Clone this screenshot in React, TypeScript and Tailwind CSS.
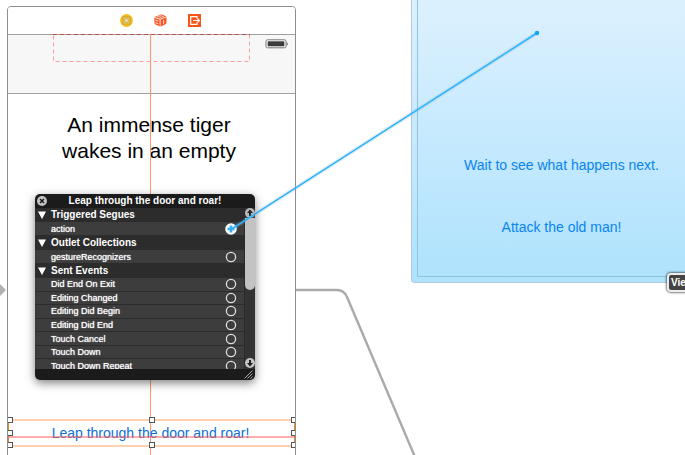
const sentEvents = [
  'Did End On Exit',
  'Editing Changed',
  'Editing Did Begin',
  'Editing Did End',
  'Touch Cancel',
  'Touch Down',
  'Touch Down Repeat',
];

function GroupHeading({ children }: { children: string }) {
  return (
    <h3 className="flex h-[14px] items-center bg-[#2c2c2c] text-[10px] leading-[14px] font-bold">
      <svg className="ml-[3px] mr-[5px] size-2" viewBox="0 0 8 8" aria-hidden="true">
        <path d="M0 0.5h8L4 8z" fill="#fff" />
      </svg>
      {children}
    </h3>
  );
}

function Outlet({ name, connected = false }: { name: string; connected?: boolean }) {
  return (
    <li className="flex min-h-[13px] items-center justify-between border-b border-[#2c2c2c] bg-[#3d3d3d] pl-4 pr-[7px] text-[9px] leading-[12px] [text-shadow:0_0_1px_#fff]">
      <span>{name}</span>
      <button aria-label={`Connect ${name}`} className="flex size-[12px] items-center justify-center">
        <svg className="size-[12px] shrink-0" viewBox="0 0 12 12" aria-hidden="true">
          {connected ? (
            <>
              <circle cx="6" cy="6" r="5.8" fill="#fff" />
              <path d="M6 2.5v7M2.5 6h7" stroke="#2fb0f5" strokeWidth="2.6" />
            </>
          ) : (
            <circle cx="6" cy="6" r="4.6" fill="none" stroke="#dedede" strokeWidth="1.3" />
          )}
        </svg>
      </button>
    </li>
  );
}

function ConnectionsPanel() {
  return (
    <section className="absolute left-[35px] top-[194px] flex h-[186px] w-[220px] flex-col overflow-hidden rounded-[5px] bg-[#1b1b1b] text-white shadow-[0_3px_10px_rgba(0,0,0,0.5)]">
      <header className="flex h-[14px] shrink-0 items-center pl-[2px] pr-[12px]">
        <button aria-label="Close" className="size-[10px]">
          <svg className="size-[10px]" viewBox="0 0 10 10" aria-hidden="true">
            <circle cx="5" cy="5" r="5" fill="#c4c4c4" />
            <path d="M3 3l4 4M7 3l-4 4" stroke="#1b1b1b" strokeWidth="1.5" />
          </svg>
        </button>
        <h2 className="grow text-center text-[10px] leading-[14px] font-bold">Leap through the door and roar!</h2>
      </header>
      <div className="flex h-[161px] shrink-0 overflow-hidden bg-[#3d3d3d]">
        <div className="grow">
          <GroupHeading>Triggered Segues</GroupHeading>
          <ul className="grid h-[14px]">
            <Outlet name="action" connected />
          </ul>
          <GroupHeading>Outlet Collections</GroupHeading>
          <ul className="grid h-[14px]">
            <Outlet name="gestureRecognizers" />
          </ul>
          <GroupHeading>Sent Events</GroupHeading>
          <ul className="grid h-[95px] auto-rows-fr">
            {sentEvents.map((name) => (
              <Outlet key={name} name={name} />
            ))}
          </ul>
        </div>
        <div className="flex w-[11px] flex-col items-center border-l border-[#2a2a2a] bg-[#333]">
          <svg className="size-[10px] shrink-0" viewBox="0 0 10 10" aria-hidden="true">
            <circle cx="5" cy="5" r="5" fill="#b9b9b9" />
            <path d="M5 1.6L8 5H6v3H4V5H2z" fill="#222" />
          </svg>
          <div className="h-[72px] w-[10px] shrink-0 rounded-b-full bg-[#c3c3c3]" />
          <div className="grow" />
          <svg className="mb-px size-[10px] shrink-0" viewBox="0 0 10 10" aria-hidden="true">
            <circle cx="5" cy="5" r="5" fill="#c3c3c3" />
            <path d="M5 8.4L2 5h2V2h2v3h2z" fill="#222" />
          </svg>
        </div>
      </div>
      <footer className="flex grow items-center justify-end pr-[2px]">
        <svg className="size-[9px]" viewBox="0 0 9 9" aria-hidden="true">
          <path d="M0.5 8.5l8-8M3.5 8.5l5-5M6.5 8.5l2-2" stroke="#aaa" strokeWidth="1" />
        </svg>
      </footer>
    </section>
  );
}

function SceneIcons() {
  return (
    <div className="flex h-[27px] items-center justify-center gap-[21px] rounded-t-[3px] bg-white pl-[18px]">
      <svg className="size-[13px]" viewBox="0 0 13 13" aria-hidden="true">
        <circle cx="6.5" cy="6.5" r="6.4" fill="#f7bd1c" />
        <rect x="3" y="3" width="7" height="7" fill="#eccb60" stroke="#b3923a" strokeWidth="0.7" />
        <rect x="5" y="5" width="3" height="3" fill="#fff6d5" stroke="#b3923a" strokeWidth="0.6" />
      </svg>
      <svg className="size-[13px]" viewBox="0 0 13 13" aria-hidden="true">
        <path d="M0.5 3L7.5 0.3l5 2.2L6.2 4.8z" fill="#fb5626" />
        <path d="M0.3 3.8l5.4 1.7v7L0.6 10z" fill="#fb5626" />
        <path d="M6.5 5.5l6.2-2.3-.4 6.6-5.8 2.9z" fill="#fb5626" />
        <path d="M3 2.8l5-1.5M5.5 3.7l4.7-1.6" stroke="#fff" strokeWidth="0.6" />
        <path d="M1.5 6.2l2.8.9M1.5 8.8l2.8.9M9.6 6v4" stroke="#fff" strokeWidth="0.8" />
      </svg>
      <svg className="size-[13px]" viewBox="0 0 13 13" aria-hidden="true">
        <rect width="13" height="13" fill="#fa5518" />
        <path d="M9 4.5V2.7H2.7v7.6H9V8.6" fill="none" stroke="#fff" strokeWidth="1.2" />
        <path d="M5.2 6.5h6M9.4 4.5l2 2-2 2" fill="none" stroke="#fff" strokeWidth="1.1" />
      </svg>
    </div>
  );
}

function Handle() {
  return <span className="size-[6px] border border-[#555] bg-white" />;
}

function SelectedButton() {
  return (
    <div className="absolute inset-x-0 top-[409px] h-[33px] overflow-hidden">
      <button className="absolute inset-x-0 top-[3px] h-[28px] border-x border-y-2 border-x-[#e08a20] border-y-[#ffd0b0] pr-[2px] text-[14px] text-[#0a6fdc]">
        Leap through the door and roar!
      </button>
      <span className="absolute inset-x-0 top-[20px] h-[2px] bg-[#ff5a5a]/50" />
      <div className="absolute -left-px -right-[2px] inset-y-[1px] flex flex-col justify-between">
        <div className="flex justify-between"><Handle /><Handle /><Handle /></div>
        <div className="flex justify-between"><Handle /><Handle /></div>
        <div className="flex justify-between"><Handle /><Handle /><Handle /></div>
      </div>
    </div>
  );
}

function SourceScene() {
  return (
    <article className="absolute -bottom-2 left-[7px] top-[6px] w-[289px] rounded-t-[4px] border border-[#8d8d8d] bg-white">
      <SceneIcons />
      <div className="flex h-[60px] items-start justify-end border-y border-[#a0a0a0] bg-[#f7f7f7] pr-[6px] pt-[4px]">
        <svg className="h-[10px] w-[24px]" viewBox="0 0 24 10" aria-hidden="true">
          <rect x="1" y="0.8" width="20" height="8" rx="1.5" fill="#fff" stroke="#777" />
          <rect x="2.7" y="2.3" width="16.6" height="5" fill="#3c3c3c" />
          <path d="M21.5 3.2q1.5.2 1.5 1.7t-1.5 1.7z" fill="#888" />
        </svg>
      </div>
      <svg className="absolute left-[45px] top-[27px] h-[28px] w-[197px]" viewBox="0 0 197 28" aria-hidden="true">
        <rect x="0.5" y="0.5" width="196" height="27" fill="none" stroke="#ff9c9c" strokeDasharray="4 3" />
        <path d="M0 0.5h197" stroke="#b5544e" strokeDasharray="4 3" />
      </svg>
      <p className="pr-[5px] pt-[18px] text-center text-[21px] leading-[26px] text-black">
        An immense tiger
        <br />
        wakes in an empty
      </p>
      <div className="absolute inset-x-0 bottom-0 top-[27px] flex justify-center pr-[2px]">
        <span className="w-px bg-[#ff9a66]" />
      </div>
      <SelectedButton />
    </article>
  );
}

function DestinationScene() {
  return (
    <article className="absolute -top-2 left-[411px] h-[291px] w-[301px] rounded-b-[3px] border border-[#b3c8e2] bg-linear-to-b from-[#ddf1fe] to-[#aee2fd] p-[5px]">
      <div className="flex h-full flex-col items-center justify-end gap-[35px] border border-[#94c1dc] pb-[35px] text-[14px] leading-[27px] text-[#0a84ee]">
        <button>Wait to see what happens next.</button>
        <button>Attack the old man!</button>
      </div>
    </article>
  );
}

export default function App() {
  return (
    <main className="relative h-screen w-full overflow-hidden bg-white font-['Liberation_Sans',Arial,sans-serif]">
      <svg className="absolute left-0 top-0 h-[455px] w-[685px]" viewBox="0 0 685 455" aria-hidden="true">
        <path d="M0 284v12l6-6z" fill="#b2b2b2" />
        <path d="M295 290h42q7 0 10 7l68 160" fill="none" stroke="#aaa" strokeWidth="2.4" />
      </svg>
      <SourceScene />
      <DestinationScene />
      <span className="absolute left-[667px] top-[273px] rounded-[4px] border-2 border-[#eee] bg-[#444] px-[2px] text-[10px] leading-[15px] font-bold whitespace-nowrap text-white shadow-[0_0_2px_1px_rgba(0,0,0,0.5)]">
        View Controller
      </span>
      <ConnectionsPanel />
      <svg className="pointer-events-none absolute left-0 top-0 h-[455px] w-[685px]" viewBox="0 0 685 455" aria-hidden="true">
        <path d="M231 229.5L537 33" stroke="#7fb5d8" strokeOpacity="0.25" strokeWidth="4" />
        <path d="M231 229.5L537 33" stroke="#2ab2fb" strokeWidth="1.5" />
        <circle cx="537" cy="33" r="2.2" fill="#0aa5f8" />
      </svg>
    </main>
  );
}
